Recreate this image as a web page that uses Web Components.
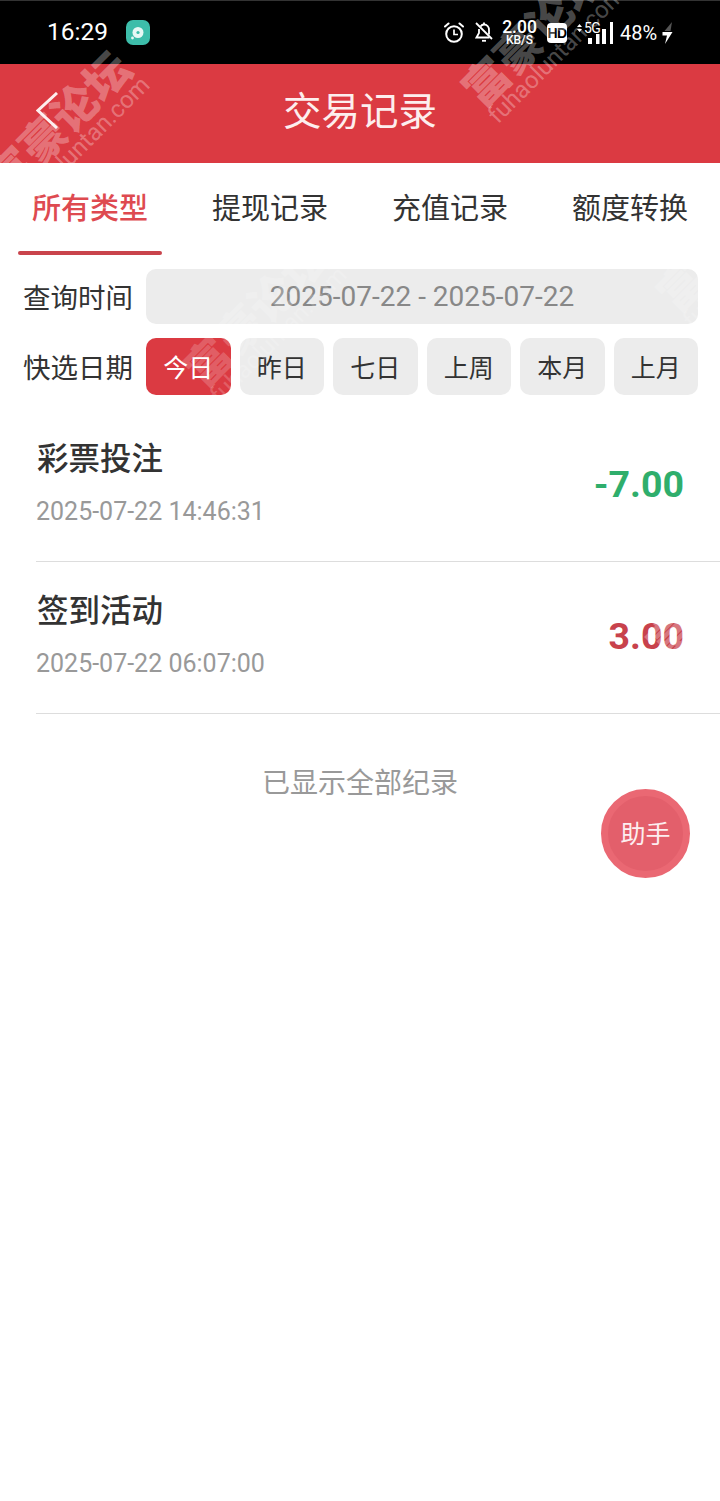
<!DOCTYPE html>
<html lang="zh">
<head>
<meta charset="utf-8">
<title>交易记录</title>
<style>
  html, body { margin: 0; padding: 0; background: #fff; }
  body {
    position: relative;
    width: 720px;
    height: 1501px;
    overflow: hidden;
    font-family: Roboto, "Noto Sans CJK SC", sans-serif;
  }
</style>
</head>
<body>
<status-bar></status-bar>
<app-header>交易记录</app-header>
<tab-bar>
  <tab-item active>所有类型</tab-item>
  <tab-item>提现记录</tab-item>
  <tab-item>充值记录</tab-item>
  <tab-item>额度转换</tab-item>
</tab-bar>
<date-filter>
  <quick-chip active>今日</quick-chip>
  <quick-chip>昨日</quick-chip>
  <quick-chip>七日</quick-chip>
  <quick-chip>上周</quick-chip>
  <quick-chip>本月</quick-chip>
  <quick-chip>上月</quick-chip>
</date-filter>
<record-list>
  <record-item name="彩票投注" time="2025-07-22 14:46:31" amount="-7.00" kind="out"></record-item>
  <record-item name="签到活动" time="2025-07-22 06:07:00" amount="3.00" kind="in"></record-item>
</record-list>
<list-end>已显示全部纪录</list-end>
<helper-button>助手</helper-button>

<water-mark x="10" y="202"></water-mark>
<water-mark x="485" y="112"></water-mark>
<water-mark x="207" y="392" faint></water-mark>
<water-mark x="680" y="317" faint></water-mark>
<water-mark x="670" y="667"></water-mark>

<script>
  class StatusBar extends HTMLElement {
    constructor() {
      super();
      this.attachShadow({ mode: "open" }).innerHTML = `
      <style>
        :host { display: flex; align-items: center; height: 63px; padding-left: 47px; background: #000; color: #fff; border-top: 1px solid #333; }
        .time { font-size: 24.500px; width: 79px; margin-top: -3px; }
        .app { width: 24px; height: 25px; }
        .right { margin-left: auto; display: flex; align-items: center; margin-right: 47px; }
        svg { display: block; flex: none; }
        .speed { display: flex; flex-direction: column; align-items: center; width: 33px; margin-left: 10px; font-weight: 500; }
        .speed b { font-size: 17.500px; font-weight: 500; height: 14px; line-height: 14px; }
        .speed small { font-size: 12px; height: 10px; line-height: 10px; margin-top: 1px; }
        .hd { width: 20px; height: 20px; margin-left: 11px; border-radius: 4px; background: #fff; color: #000; font: 700 14px/20px "Liberation Sans", sans-serif; text-align: center; letter-spacing: -0.5px; }
        .signal { position: relative; width: 36px; height: 22px; margin-left: 10px; }
        .signal span { position: absolute; left: 7px; top: -1px; font-size: 14px; line-height: 14px; letter-spacing: -0.6px; }
        .pct { font-size: 20px; width: 42px; margin-left: 7px; }
      </style>
      <span class="time">16:29</span>
      <svg class="app" viewBox="0 0 24 25">
        <rect width="24" height="25" rx="7" fill="#3dbdaa"/>
        <circle cx="12" cy="12.500" r="5.500" fill="#e8f8f5"/>
        <circle cx="12" cy="12.500" r="1.600" fill="#3dbdaa"/>
        <circle cx="6.500" cy="18" r="1.400" fill="#e8f8f5"/>
      </svg>
      <div class="right">
        <svg width="20" height="21" viewBox="0 0 20 21" fill="none" stroke="#fff" stroke-width="2">
          <circle cx="10" cy="12" r="7.800"/>
          <path d="M10 7.500V12.500H14" stroke-width="1.700"/>
          <path d="M1 4.500L4.500 1.500M19 4.500L15.500 1.500" stroke-linecap="round"/>
        </svg>
        <svg width="18" height="21" viewBox="0 0 18 21" fill="none" stroke="#fff" stroke-width="1.800" style="margin-left:11px">
          <path d="M5.500 4.500C6.500 3 7.800 2.500 9 2.500C12 2.500 14 5 14 8V12.500"/>
          <path d="M4 7V11L1.500 15.500H14.500"/>
          <path d="M1 1L17 17"/>
          <path d="M7 18.800H11"/>
          <path d="M9 0.500V2.500"/>
        </svg>
        <div class="speed"><b>2.00</b><small>KB/S</small></div>
        <div class="hd">HD</div>
        <div class="signal">
          <svg width="36" height="22" viewBox="0 0 36 22" fill="#fff">
            <path d="M2.500 2L5 5H0ZM2.500 10L0 7H5Z"/>
            <rect x="11" y="16" width="4" height="6"/>
            <rect x="19" y="12" width="3.500" height="10"/>
            <rect x="25" y="7" width="4" height="15"/>
            <rect x="33" y="0" width="3" height="22"/>
          </svg>
          <span>5G</span>
        </div>
        <span class="pct">48%</span>
        <svg width="11" height="24" viewBox="0 0 11 24">
          <path d="M10 1L8.500 10H2.500Z" fill="#555"/>
          <path d="M0.500 11H10.500L3 23L5 14.500H0.500Z" fill="#fff"/>
        </svg>
      </div>`;
    }
  }

  class AppHeader extends HTMLElement {
    constructor() {
      super();
      this.attachShadow({ mode: "open" }).innerHTML = `
      <style>
        :host { display: flex; align-items: center; justify-content: center; position: relative; height: 99px; background: #db3a42; color: #fdeeee; font-size: 38.500px; box-sizing: border-box; font-family: "Noto Sans CJK SC", sans-serif; padding-bottom: 12px; }
        svg { position: absolute; left: 36px; top: 28px; }
      </style>
      <svg width="22" height="37" viewBox="0 0 22 37" fill="none" stroke="#fdeeee" stroke-width="3">
        <path d="M21 1L2 18.500L21 36"/>
      </svg>
      <slot></slot>`;
    }
  }

  class TabBar extends HTMLElement {
    constructor() {
      super();
      this.attachShadow({ mode: "open" }).innerHTML = `
      <style>
        :host { display: grid; grid-template-columns: repeat(4, 180px); height: 92px; }
      </style>
      <slot></slot>`;
    }
  }

  class TabItem extends HTMLElement {
    constructor() {
      super();
      this.attachShadow({ mode: "open" }).innerHTML = `
      <style>
        :host { display: flex; flex-direction: column; align-items: center; color: #333; font-size: 29px; font-family: "Noto Sans CJK SC", sans-serif; }
        .label { height: 88px; line-height: 88px; margin-top: -1px; flex: none; }
        .line { width: 144px; height: 4px; border-radius: 2px; flex: none; margin-top: 1px; }
        :host([active]) { color: #de4a50; font-weight: 500; }
        :host([active]) .line { background: #c9444c; }
      </style>
      <span class="label"><slot></slot></span>
      <span class="line"></span>`;
    }
  }

  class DateFilter extends HTMLElement {
    constructor() {
      super();
      this.attachShadow({ mode: "open" }).innerHTML = `
      <style>
        :host { display: grid; grid-template-columns: 123px 552px; row-gap: 14px; padding: 14px 0 0 23px; font-family: "Noto Sans CJK SC", sans-serif; }
        .label { font-size: 27.500px; color: #333; display: flex; align-items: center; white-space: nowrap; margin-top: -2px; }
        .range { height: 55px; border-radius: 10px; background: #ececec; color: #888; font: 28px Roboto, sans-serif; display: flex; align-items: center; justify-content: center; }
        .chips { display: grid; grid-template-columns: repeat(6, 1fr); gap: 9px; height: 57px; }
      </style>
      <span class="label">查询时间</span>
      <div class="range">2025-07-22 - 2025-07-22</div>
      <span class="label">快选日期</span>
      <div class="chips"><slot></slot></div>`;
    }
  }

  class QuickChip extends HTMLElement {
    constructor() {
      super();
      this.attachShadow({ mode: "open" }).innerHTML = `
      <style>
        :host { display: flex; align-items: center; justify-content: center; border-radius: 10px; background: #ececec; color: #333; font-size: 25px; padding-bottom: 2px; box-sizing: border-box; }
        :host([active]) { background: #db3a42; color: #fff; }
      </style>
      <slot></slot>`;
    }
  }

  class RecordList extends HTMLElement {
    constructor() {
      super();
      this.attachShadow({ mode: "open" }).innerHTML = `
      <style>:host { display: block; padding: 15px 0 0 36px; }</style>
      <slot></slot>`;
    }
  }

  class RecordItem extends HTMLElement {
    constructor() {
      super();
      const root = this.attachShadow({ mode: "open" });
      root.innerHTML = `
      <style>
        :host { display: flex; align-items: center; justify-content: space-between; height: 152px; box-sizing: border-box; border-bottom: 1px solid #ddd; padding-right: 36px; }
        .info { padding: 0 0 6px 0; }
        .name { font: 500 31.500px/36px "Noto Sans CJK SC", sans-serif; color: #333; padding-left: 1px; }
        .time { font: 25px/30px Roboto, sans-serif; color: #999; margin-top: 23px; }
        .amount { font: 700 37.500px Roboto, sans-serif; margin-top: -3px; }
        .out { color: #2fae6c; }
        .in { color: #c8424c; }
      </style>
      <div class="info">
        <div class="name"></div>
        <div class="time"></div>
      </div>
      <div class="amount"></div>`;
      root.querySelector(".name").textContent = this.getAttribute("name");
      root.querySelector(".time").textContent = this.getAttribute("time");
      const amount = root.querySelector(".amount");
      amount.textContent = this.getAttribute("amount");
      amount.classList.add(this.getAttribute("kind"));
    }
  }

  class ListEnd extends HTMLElement {
    constructor() {
      super();
      this.attachShadow({ mode: "open" }).innerHTML = `
      <style>:host { display: block; text-align: center; font: 28px/40px "Noto Sans CJK SC", sans-serif; color: #999; padding-top: 47px; }</style>
      <slot></slot>`;
    }
  }

  // floats over the page like in the app
  class HelperButton extends HTMLElement {
    constructor() {
      super();
      this.attachShadow({ mode: "open" }).innerHTML = `
      <style>
        :host { position: absolute; left: 601px; top: 789px; width: 89px; height: 89px; box-sizing: border-box; border-radius: 50%; background: #e35f6b; border: 7px solid #ea6873; color: #fdeef0; display: flex; align-items: center; justify-content: center; font: 25px "Noto Sans CJK SC", sans-serif; padding-bottom: 3px; }
      </style>
      <slot></slot>`;
    }
  }

  // site watermark stamped over the screenshot, white so it only shows on dark parts
  class WaterMark extends HTMLElement {
    constructor() {
      super();
      const alpha = this.hasAttribute("faint") ? 0.2 : 0.3;
      this.attachShadow({ mode: "open" }).innerHTML = `
      <style>
        :host { position: absolute; left: ${this.getAttribute("x")}px; top: ${this.getAttribute("y")}px; width: 0; height: 0; pointer-events: none; color: rgba(255,255,255,${alpha}); transform: rotate(-45deg); transform-origin: 0 0; white-space: nowrap; }
        .big { position: absolute; left: 0; top: -46px; font: 900 45px/46px "Noto Sans CJK SC", sans-serif; }
        .small { position: absolute; left: 0; top: -4px; font: 24px/28px Roboto, sans-serif; }
      </style>
      <span class="big">富豪论坛</span>
      <span class="small">fuhaoluntan.com</span>`;
    }
  }

  customElements.define("status-bar", StatusBar);
  customElements.define("app-header", AppHeader);
  customElements.define("tab-bar", TabBar);
  customElements.define("tab-item", TabItem);
  customElements.define("date-filter", DateFilter);
  customElements.define("quick-chip", QuickChip);
  customElements.define("record-list", RecordList);
  customElements.define("record-item", RecordItem);
  customElements.define("list-end", ListEnd);
  customElements.define("helper-button", HelperButton);
  customElements.define("water-mark", WaterMark);
</script>
</body>
</html>
